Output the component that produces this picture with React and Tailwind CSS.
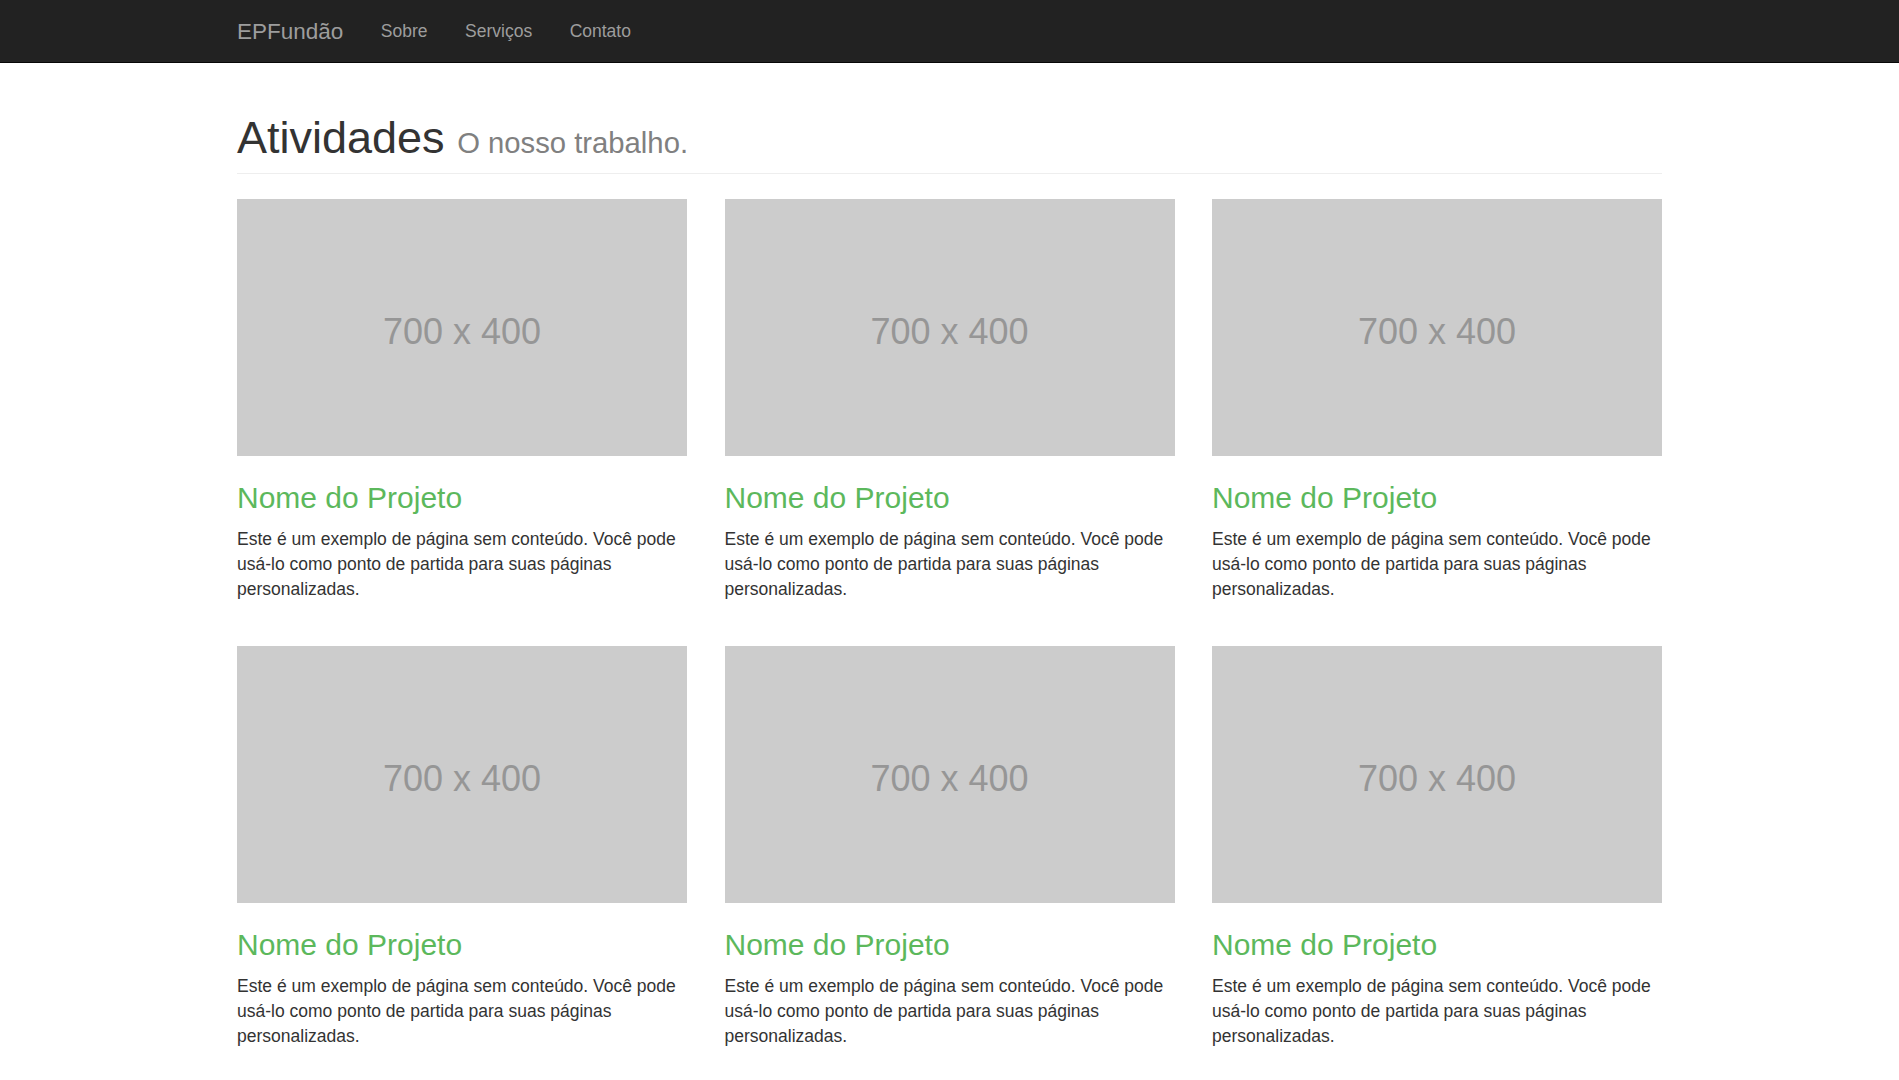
// App.jsx
const NAV_LINKS = ["Sobre", "Serviços", "Contato"];
const PROJECTS = [1, 2, 3, 4, 5, 6];

function Placeholder() {
  return (
    <div className="h-[257px] bg-[#cccccc] flex items-center justify-center pt-[8px]">
      <span className="text-[36px] leading-none text-[#969696]">700 x 400</span>
    </div>
  );
}

function ProjectCard() {
  return (
    <div>
      <a href="#">
        <Placeholder />
      </a>
      <h3 className="mt-[25px] mb-[12.5px] text-[30px] leading-[33px] text-[#5cb85c]">
        <a href="#">Nome do Projeto</a>
      </h3>
      <p className="text-[17.5px] leading-[25px] text-[#333333]">
        Este é um exemplo de página sem conteúdo. Você pode usá-lo como ponto de
        partida para suas páginas personalizadas.
      </p>
    </div>
  );
}

export default function App() {
  return (
    <div
      className="min-h-screen bg-white"
      style={{ fontFamily: '"Liberation Sans", Arial, sans-serif' }}
    >
      {/* navbar */}
      <nav className="h-[63px] bg-[#222222] border-b border-[#080808]">
        <div className="w-[1425px] mx-auto h-full flex items-center gap-[37.5px]">
          <a href="#" className="text-[22.5px] leading-[25px] text-[#9d9d9d]">
            EPFundão
          </a>
          {NAV_LINKS.map((l) => (
            <a key={l} href="#" className="text-[17.5px] leading-[25px] text-[#9d9d9d]">
              {l}
            </a>
          ))}
        </div>
      </nav>

      <main className="w-[1425px] mx-auto">
        {/* page header */}
        <div className="mt-[49.5px] pb-[11.25px] mb-[25px] border-b border-[#eeeeee]">
          <h1 className="text-[45px] leading-[49.5px] text-[#333333]">
            Atividades{" "}
            <small className="text-[29.25px] leading-none text-[#808080]">O nosso trabalho.</small>
          </h1>
        </div>

        <div className="grid grid-cols-3 gap-x-[37.5px] gap-y-[44.5px]">
          {PROJECTS.map((p) => (
            <ProjectCard key={p} />
          ))}
        </div>
      </main>
    </div>
  );
}
